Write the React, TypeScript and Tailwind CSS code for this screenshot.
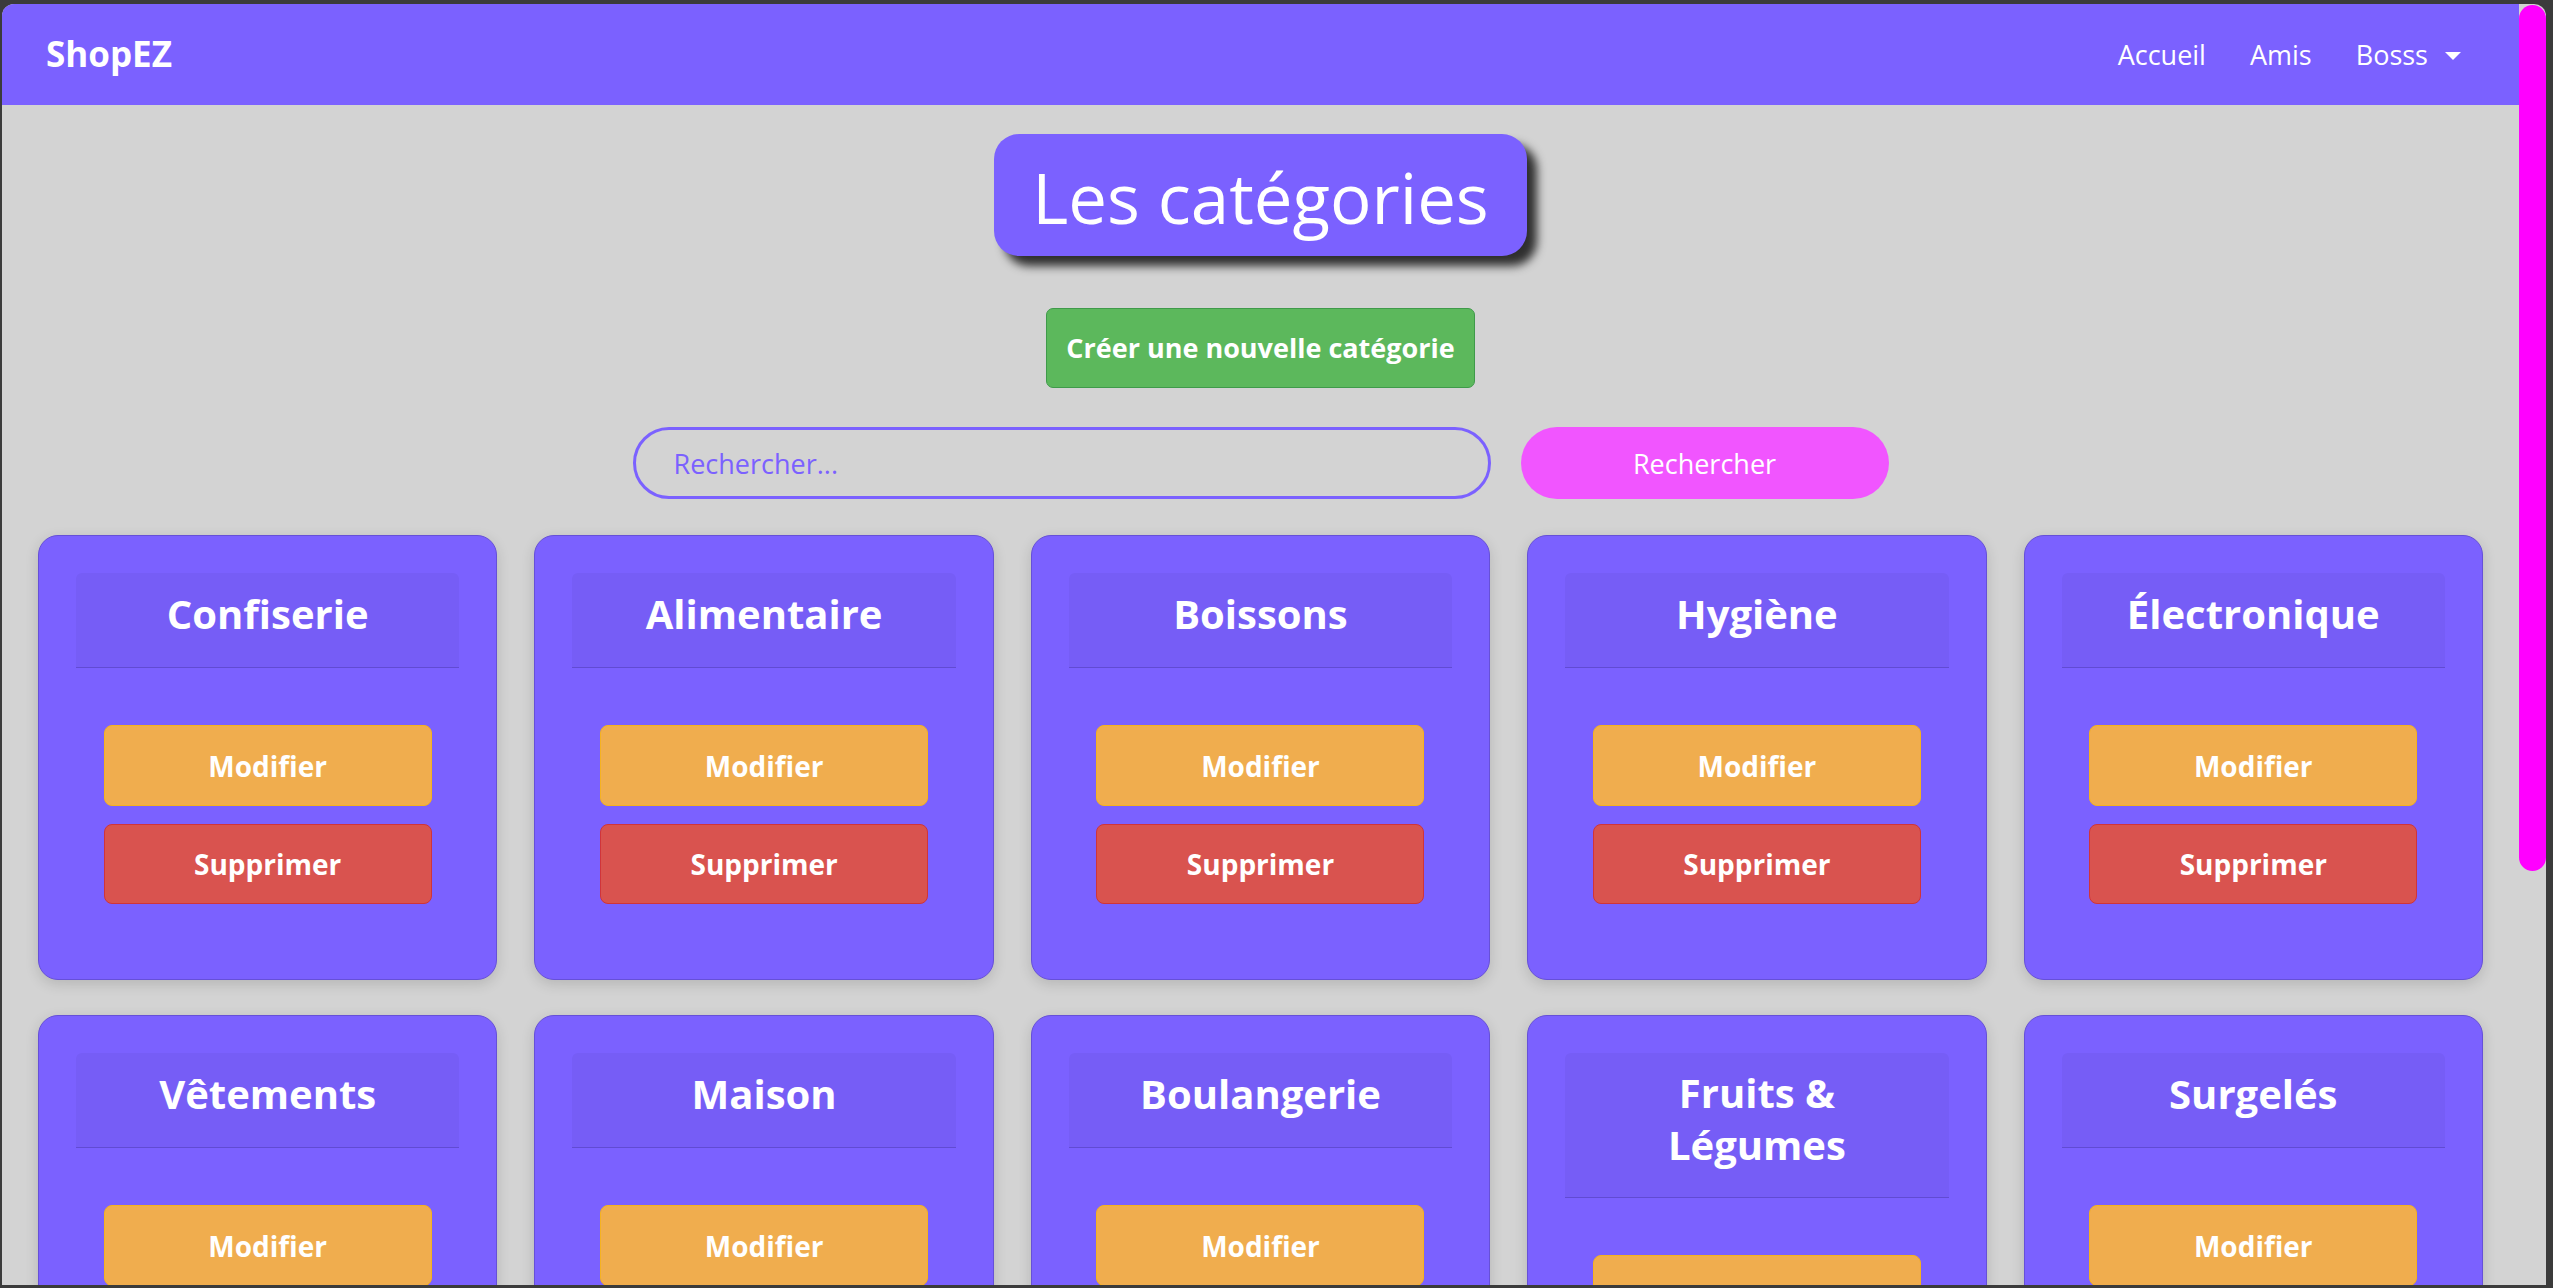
import { Fragment } from "react";

const categories = [
  "Confiserie",
  "Alimentaire",
  "Boissons",
  "Hygiène",
  "Électronique",
  "Vêtements",
  "Maison",
  "Boulangerie",
  "Fruits & Légumes",
  "Surgelés",
];

function NavBar() {
  return (
    <nav className="h-[101px] shrink-0 bg-[#7b61ff] flex items-center justify-between pl-[44px] pr-[58px] text-white">
      <span className="text-[35px] font-bold">ShopEZ</span>
      <div className="flex items-center gap-[44px] text-[27px] pt-[2px]">
        <span>Accueil</span>
        <span>Amis</span>
        <span className="flex items-center gap-[17px]">
          Bosss
          <span className="w-0 h-0 border-l-[8px] border-r-[8px] border-t-[8px] border-l-transparent border-r-transparent border-t-white" />
        </span>
      </div>
    </nav>
  );
}

function CategoryCard({ name }: { name: string }) {
  return (
    <div className="flex flex-col p-[37px] bg-[#7b61ff] border border-[#6650d8] rounded-[20px] shadow-[0_4px_14px_rgba(0,0,0,0.14)]">
      <div className="
        min-h-[95px] flex items-center justify-center
        px-[33px] pt-[14px] pb-[26px]
        bg-[#765df6] border-b border-[#614bd2] rounded-t-[6px]">
        <h4 className="text-center text-[40px] leading-[52px] font-bold text-white">{name}</h4>
      </div>
      <div className="flex flex-col items-center gap-[18px] pt-[57px] pb-[38px]">
        <button className="w-[328px] h-[81px] rounded-[8px] bg-[#f0ad4e] border border-[#f5b21f] text-white text-[28px] font-bold">
          Modifier
        </button>
        <button className="w-[328px] h-[80px] rounded-[8px] bg-[#d9534f] border border-[#d0343a] text-white text-[28px] font-bold">
          Supprimer
        </button>
      </div>
    </div>
  );
}

export default function App() {
  return (
    <div
      className="w-[2553px] h-[1288px] overflow-hidden bg-[#3b3b3b] pt-[4px] pl-[2px] pr-[7px] pb-[3px] flex"
      style={{ fontFamily: '"Open Sans", "Noto Sans", sans-serif' }}
    >
      <div className="flex-1 flex overflow-hidden rounded-tl-[12px] rounded-tr-[12px] bg-[#d3d3d3]">
        <div className="flex-1 flex flex-col overflow-hidden">
          <NavBar />

          <main className="flex flex-col items-center">
            <div className="mt-[29px] h-[122px] flex items-center px-[38px] rounded-[25px] bg-[#7b61ff] shadow-[10px_10px_10px_rgba(0,0,0,0.78)]">
              <h1 className="text-[69px] text-white leading-none pt-[4px]">Les catégories</h1>
            </div>

            <button className="mt-[52px] h-[80px] px-[19px] rounded-[7px] bg-[#5cb85c] border border-[#3f9a4a] text-white text-[27px] font-bold">
              Créer une nouvelle catégorie
            </button>

            <div className="mt-[39px] flex gap-[30px]">
              <input
                placeholder="Rechercher..."
                className="w-[858px] h-[72px] rounded-full border-[3px] border-[#7b61ff] bg-transparent px-[38px] text-[27px] text-[#7b61ff] placeholder:text-[#7b61ff] outline-none"
              />
              <button className="w-[368px] h-[72px] rounded-full bg-[#f155ff] text-white text-[27px] pt-[2px]">
                Rechercher
              </button>
            </div>

            <div className="mt-[36px] w-full grid grid-cols-5 gap-x-[37px] gap-y-[35px] px-[36px]">
              {categories.map((c) => (
                <Fragment key={c}>
                  <CategoryCard name={c} />
                </Fragment>
              ))}
            </div>
          </main>
        </div>

        <div className="w-[27px] shrink-0 pt-[1px]">
          <div className="h-[866px] rounded-full bg-[#ff00ff]" />
        </div>
      </div>
    </div>
  );
}
